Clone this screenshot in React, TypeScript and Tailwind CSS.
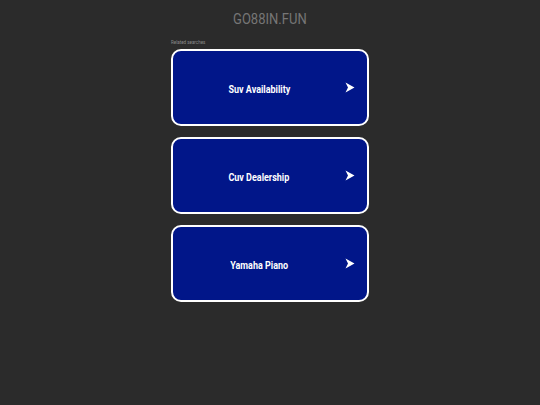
import React from 'react';

const searches = ['Suv Availability', 'Cuv Dealership', 'Yamaha Piano'];

function Arrow() {
  return (
    <svg width="10" height="11" viewBox="0 0 10 11" aria-hidden>
      <path d="M0.5 0.5 L9.5 5.5 L0.5 10.5 L3 5.5 Z" fill="#ffffff" />
    </svg>
  );
}

export default function App() {
  return (
    <div
      className="flex h-[405px] w-[540px] flex-col items-center bg-[#2b2b2b]"
      style={{ fontFamily: 'Roboto, "Liberation Sans", sans-serif' }}
    >
      <h1 className="mt-[9px] scale-x-[0.84] text-[15.5px] leading-[20px] text-[#767676]">GO88IN.FUN</h1>
      <div className="mt-[11px] flex w-[198px] flex-col">
        <p className="text-[4.5px] leading-[6px] text-[#8a8a8a]">Related searches</p>
        <div className="mt-[3px] flex flex-col gap-[11px]">
          {searches.map((label) => (
            <a
              key={label}
              href="#"
              className="flex h-[77px] items-center rounded-[10px] border-2 border-white bg-[#011689]"
            >
              <span className="flex-1 text-center">
                <span className="inline-block scale-x-[0.9] text-[10px] font-bold text-white">{label}</span>
              </span>
              <span className="mr-[12px] flex">
                <Arrow />
              </span>
            </a>
          ))}
        </div>
      </div>
    </div>
  );
}
